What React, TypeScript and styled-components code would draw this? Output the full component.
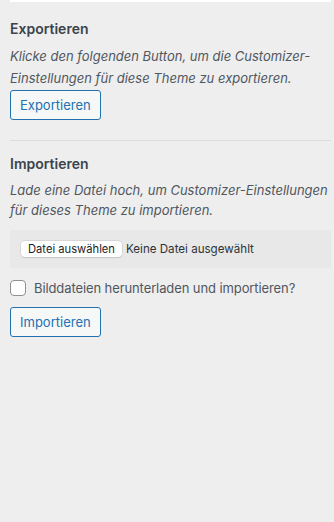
import React from "react";
import styled, { createGlobalStyle } from "styled-components";

const GlobalStyle = createGlobalStyle`
  html, body {
    margin: 0;
    padding: 0;
    background: #eeeeee;
  }
  body {
    font-family: Inter, "Noto Sans", "Liberation Sans", sans-serif;
    color: #50575e;
  }
`;

const Panel = styled.div`
  width: 334px;
  height: 522px;
  box-sizing: border-box;
  padding: 0 3px 0 10px;
  background: #eeeeee;
`;

const TopCard = styled.div`
  height: 2px;
  background: #ffffff;
`;

const Section = styled.section<{ $first?: boolean }>`
  display: flex;
  flex-direction: column;
  align-items: flex-start;
  padding-top: ${(p) => (p.$first ? "19px" : "15px")};
  padding-bottom: 20px;
  border-bottom: ${(p) => (p.$first ? "1px solid #dcdcde" : "none")};
`;

const Heading = styled.h3`
  margin: 0 0 9px;
  font-size: 14px;
  line-height: 16px;
  font-weight: 600;
  color: #3c434a;
`;

const Description = styled.p<{ $lh: number; $mb: number }>`
  margin: 0 0 ${(p) => p.$mb}px;
  font-size: 13px;
  line-height: ${(p) => p.$lh}px;
  font-style: italic;
  color: #50575e;
`;

const OutlineButton = styled.button`
  display: inline-flex;
  align-items: center;
  height: 30px;
  box-sizing: border-box;
  padding: 0 9px;
  border: 1px solid #2271b1;
  border-radius: 3px;
  background: #f6f7f7;
  color: #2271b1;
  font-family: inherit;
  font-size: 13px;
  cursor: pointer;
`;

const FileRow = styled.div`
  align-self: stretch;
  height: 38px;
  display: flex;
  align-items: center;
  gap: 4px;
  padding: 0 11px;
  background: #e8e8e8;
  font-size: 11.6px;
  color: #2c3338;
`;

const FilePick = styled.span`
  display: inline-flex;
  align-items: center;
  height: 16px;
  padding: 0 7px;
  background: #ffffff;
  border-radius: 4px;
  box-shadow: 0 0 0 0.5px #c8c8c8, 0 0.5px 1px rgba(0, 0, 0, 0.15);
  font-size: 11.2px;
  color: #1d2327;
`;

const CheckRow = styled.label`
  display: flex;
  align-items: center;
  gap: 8px;
  margin: 12px 0 11px;
  font-size: 13px;
  line-height: 16px;
  letter-spacing: -0.1px;
  color: #50575e;
`;

const Box = styled.span`
  width: 16px;
  height: 16px;
  box-sizing: border-box;
  border: 1px solid #8c8f94;
  border-radius: 4px;
  background: #ffffff;
`;

export default function App() {
  return (
    <>
      <GlobalStyle />
      <Panel>
        <TopCard />
        <Section $first>
          <Heading>Exportieren</Heading>
          <Description $lh={21.5} $mb={1}>
            Klicke den folgenden Button, um die Customizer-Einstellungen für diese Theme zu exportieren.
          </Description>
          <OutlineButton>Exportieren</OutlineButton>
        </Section>
        <Section>
          <Heading>Importieren</Heading>
          <Description $lh={19.5} $mb={10}>
            Lade eine Datei hoch, um Customizer-Einstellungen für dieses Theme zu importieren.
          </Description>
          <FileRow>
            <FilePick>Datei auswählen</FilePick>
            <span>Keine Datei ausgewählt</span>
          </FileRow>
          <CheckRow>
            <Box />
            Bilddateien herunterladen und importieren?
          </CheckRow>
          <OutlineButton>Importieren</OutlineButton>
        </Section>
      </Panel>
    </>
  );
}
